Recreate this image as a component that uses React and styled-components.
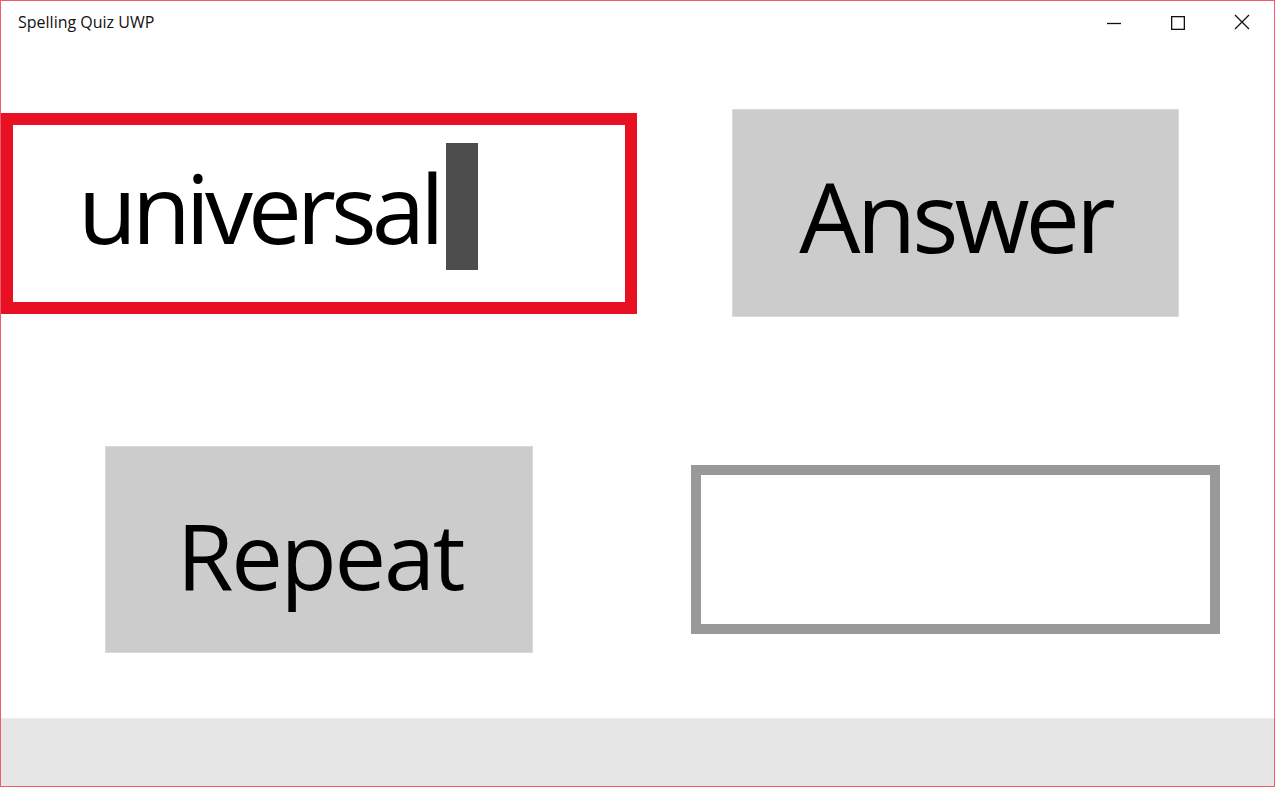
import React from "react";
import styled, { createGlobalStyle } from "styled-components";

const Global = createGlobalStyle`
  html, body { margin: 0; padding: 0; background: #ffffff; }
  * { box-sizing: border-box; }
`;

const Window = styled.div`
  width: 1275px;
  height: 787px;
  border: 1px solid #ef5b6b;
  background: #ffffff;
  display: flex;
  flex-direction: column;
  font-family: "Open Sans", "Noto Sans", sans-serif;
  overflow: hidden;
`;

const TitleBar = styled.div`
  height: 44px;
  flex: none;
  display: flex;
  align-items: center;
  justify-content: space-between;
`;

const Title = styled.div`
  padding-left: 17px;
  padding-bottom: 2px;
  font-size: 16px;
  color: #111;
`;

const Caption = styled.div`
  display: flex;
  height: 100%;
`;

const CaptionButton = styled.div`
  width: 64px;
  height: 100%;
  display: flex;
  align-items: center;
  justify-content: center;
  padding-bottom: ${(p) => p.$pb || 0}px;
`;

const Content = styled.div`
  flex: 1;
  display: flex;
  flex-direction: column;
  padding-top: 64px;
  row-gap: 129px;
`;

const Row = styled.div`
  display: flex;
  align-items: center;
  height: ${(p) => p.$h}px;
`;

const InputBox = styled.div`
  width: ${(p) => p.$w}px;
  height: ${(p) => p.$h}px;
  margin-left: ${(p) => p.$ml || 0}px;
  border: ${(p) => p.$bw}px solid ${(p) => p.$color};
  background: #ffffff;
  display: flex;
  align-items: center;
  padding-left: 65px;
`;

const InputText = styled.span`
  font-size: 96px;
  letter-spacing: -5px;
  color: #000;
  line-height: 1;
  margin-top: -12px;
`;

const Caret = styled.span`
  display: inline-block;
  width: 32px;
  height: 127px;
  background: #4d4d4d;
  margin-left: 7px;
  margin-top: -13px;
`;

const Button = styled.div`
  width: ${(p) => p.$w}px;
  height: ${(p) => p.$h}px;
  margin-left: ${(p) => p.$ml}px;
  background: #cccccc;
  border: 1px solid #dadada;
  display: flex;
  align-items: center;
  justify-content: center;
  font-size: ${(p) => p.$fs}px;
  letter-spacing: ${(p) => p.$ls}px;
  color: #000;
  line-height: 1;
  padding-top: ${(p) => p.$pt || 0}px;
  padding-left: ${(p) => p.$pl || 0}px;
`;

const BottomBar = styled.div`
  height: 68px;
  flex: none;
  background: #e6e6e6;
  border-top: 1px solid #ececec;
`;

export default function App() {
  return (
    <>
      <Global />
      <Window>
        <TitleBar>
          <Title>Spelling Quiz UWP</Title>
          <Caption>
            <CaptionButton>
              <svg width="14" height="14" viewBox="0 0 14 14">
                <line x1="0" y1="7.5" x2="14" y2="7.5" stroke="#111" strokeWidth="1.3" />
              </svg>
            </CaptionButton>
            <CaptionButton>
              <svg width="14" height="14" viewBox="0 0 14 14">
                <rect x="0.65" y="0.65" width="12.7" height="12.7" fill="none" stroke="#111" strokeWidth="1.3" />
              </svg>
            </CaptionButton>
            <CaptionButton $pb={2}>
              <svg width="16" height="16" viewBox="0 0 16 16">
                <path d="M1 1 L15 15 M15 1 L1 15" stroke="#111" strokeWidth="1.3" fill="none" />
              </svg>
            </CaptionButton>
          </Caption>
        </TitleBar>
        <Content>
          <Row $h={208}>
            <InputBox $w={636} $h={201} $bw={12} $color="#e81123">
              <InputText>universal</InputText>
              <Caret />
            </InputBox>
            <Button $w={447} $h={208} $ml={95} $fs={97} $ls={-4} $pt={4}>
              Answer
            </Button>
          </Row>
          <Row $h={207}>
            <Button $w={428} $h={207} $ml={104} $fs={92} $ls={-2.3} $pt={10} $pl={2}>
              Repeat
            </Button>
            <InputBox $w={529} $h={169} $ml={158} $bw={10} $color="#999999" />
          </Row>
        </Content>
        <BottomBar />
      </Window>
    </>
  );
}
